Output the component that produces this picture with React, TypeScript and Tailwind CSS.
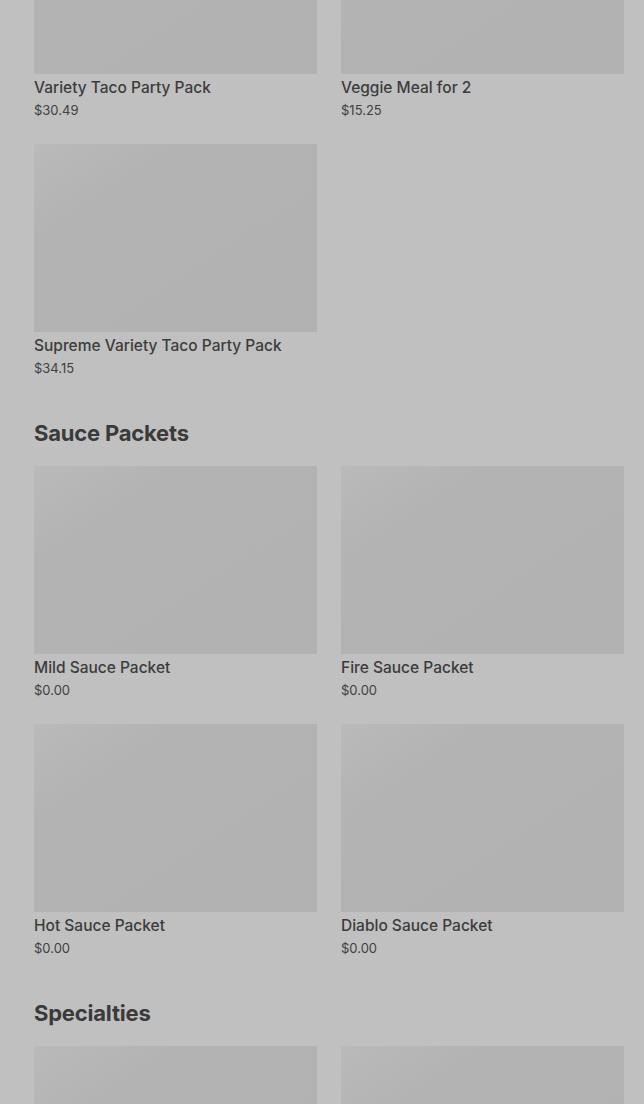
const sections = [
    {
        title: "",
        items: [
            { name: "Variety Taco Party Pack", price: "$30.49" },
            { name: "Veggie Meal for 2", price: "$15.25" },
            { name: "Supreme Variety Taco Party Pack", price: "$34.15" },
        ],
    },
    {
        title: "Sauce Packets",
        items: [
            { name: "Mild Sauce Packet", price: "$0.00" },
            { name: "Fire Sauce Packet", price: "$0.00" },
            { name: "Hot Sauce Packet", price: "$0.00" },
            { name: "Diablo Sauce Packet", price: "$0.00" },
        ],
    },
    {
        title: "Specialties",
        items: [
            { name: "", price: "" },
            { name: "", price: "" },
        ],
    },
];

const ItemCard = ({ name, price }: { name: string; price: string }) => (
    <div className="flex flex-col">
        <div className="h-[188px] w-full bg-linear-to-br from-[#bababa] via-[#b3b3b3] via-25% to-[#b1b1b1]"></div>
        {name && (
            <>
                <div className="mt-[2px] text-[15.5px] leading-6 font-medium text-[#3c3c3c]">{name}</div>
                <div className="text-[13px] leading-5 text-[#404040]">{price}</div>
            </>
        )}
    </div>
);

export default function App() {
    return (
        <div
            className="h-[1104px] bg-[#c0c0c0] overflow-hidden"
            style={{ fontFamily: "Inter, 'Liberation Sans', sans-serif" }}
        >
            <div className="pl-[34px] pr-[20px] -mt-[114px]">
                {sections.map((section, i) => (
                    <section key={i} className={i > 0 ? "mt-[41px]" : ""}>
                        {section.title && (
                            <h2 className="text-[22px] leading-7 font-bold text-[#3a3a3a] mb-[19px] tracking-[-0.2px]">
                                {section.title}
                            </h2>
                        )}
                        <div className="grid grid-cols-2 gap-x-6 gap-y-6">
                            {section.items.map((item, j) => (
                                <ItemCard key={j} {...item} />
                            ))}
                        </div>
                    </section>
                ))}
            </div>
        </div>
    );
}
